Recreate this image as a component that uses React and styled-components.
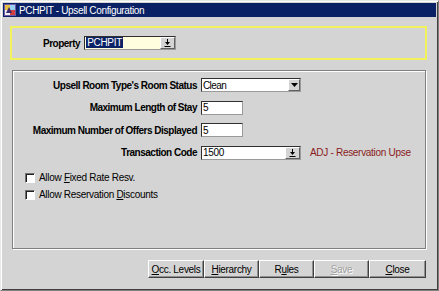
import React from "react";
import styled, { createGlobalStyle } from "styled-components";

const GlobalStyle = createGlobalStyle`
  html, body {
    margin: 0;
    padding: 0;
    background: #d4d4d4;
  }
  body {
    font-family: "Liberation Sans", Arial, sans-serif;
    font-size: 10px;
    letter-spacing: -0.3px;
    color: #000;
  }
`;

const Window = styled.div`
  width: 439px;
  height: 291px;
  box-sizing: border-box;
  background: #d4d4d4;
  border: 1px solid #808080;
  border-top-color: #e8e8e8;
  border-left-color: #e8e8e8;
  box-shadow: inset 1px 1px 0 #fff, inset -1px -1px 0 #404040;
  padding: 2px;
  display: flex;
  flex-direction: column;
`;

const TitleBar = styled.div`
  height: 14px;
  background: #0a2265;
  display: flex;
  align-items: center;
  gap: 3px;
  padding-left: 1px;
  color: #fff;
  font-size: 10px;
  letter-spacing: -0.35px;
`;

const Body = styled.div`
  flex: 1;
  display: flex;
  flex-direction: column;
  padding: 9px 9px 0 7px;
`;

const PropertyBox = styled.div`
  height: 34px;
  box-sizing: border-box;
  border: 2px solid #f2f25a;
  display: flex;
  align-items: center;
  padding-left: 31px;
  gap: 4px;
`;

const Label = styled.span`
  font-weight: 700;
  white-space: nowrap;
  letter-spacing: -0.5px;
`;

const FieldBox = styled.div`
  width: ${(p) => p.$w}px;
  height: 14px;
  box-sizing: border-box;
  background: ${(p) => p.$bg || "#fff"};
  border: 1px solid;
  border-color: #303030 #9a9a9a #9a9a9a #303030;
  display: flex;
  align-items: center;
  overflow: hidden;
`;

const FieldText = styled.span`
  flex: 1;
  padding-left: 1px;
  white-space: nowrap;
  letter-spacing: ${(p) => (p.$tight ? "-0.6px" : "-0.3px")};
`;

const Selected = styled.span`
  background: #0a2265;
  color: #fff;
  padding: 0 1px;
  line-height: 12px;
`;

const SideButton = styled.span`
  width: ${(p) => p.$w || 15}px;
  height: 12px;
  box-sizing: border-box;
  background: #d4d4d4;
  border: 1px solid;
  border-color: #fff #606060 #606060 #fff;
  display: flex;
  align-items: center;
  justify-content: center;
`;

const Panel = styled.div`
  margin: 10px 1px 0 2px;
  height: 179px;
  box-sizing: border-box;
  border: 1px solid #808080;
  box-shadow: inset 1px 1px 0 #fff, 1px 1px 0 #fff;
  padding: 7px 0 0 1px;
  display: flex;
  flex-direction: column;
`;

const FormGrid = styled.div`
  display: grid;
  grid-template-columns: 183px auto;
  column-gap: 4px;
  row-gap: 8.5px;
  align-items: center;
`;

const RowLabel = styled(Label)`
  text-align: right;
`;

const FieldRow = styled.div`
  display: flex;
  align-items: center;
  gap: 9px;
`;

const Description = styled.span`
  color: #8a1c1c;
  white-space: nowrap;
`;

const Checks = styled.div`
  display: flex;
  flex-direction: column;
  gap: 7px;
  margin: 13px 0 0 11px;
`;

const CheckRow = styled.label`
  display: flex;
  align-items: center;
  gap: 4px;
  height: 10px;
  white-space: nowrap;
`;

const CheckBox = styled.span`
  width: 10px;
  height: 10px;
  box-sizing: border-box;
  background: #fff;
  border: 1px solid;
  border-color: #707070 #fff #fff #707070;
  box-shadow: inset 1px 1px 0 #202020;
`;

const ButtonBar = styled.div`
  display: flex;
  justify-content: flex-end;
  margin: 11px 1px 0 0;
`;

const Button = styled.div`
  width: ${(p) => p.$w || 55}px;
  height: 18px;
  box-sizing: border-box;
  border: 1px solid;
  border-color: #fff #404040 #404040 #fff;
  box-shadow: inset -1px -1px 0 #909090;
  display: flex;
  align-items: center;
  justify-content: center;
  white-space: nowrap;
  color: ${(p) => (p.$disabled ? "#a0a0a0" : "#000")};
  text-shadow: ${(p) => (p.$disabled ? "1px 1px 0 #fff" : "none")};
`;

const U = styled.span`
  text-decoration: underline;
`;

const AppIcon = () => (
  <svg width="12" height="12" viewBox="0 0 12 12">
    <rect x="0" y="0" width="12" height="12" fill="#6a5aa8" />
    <rect x="1" y="1" width="5" height="5" fill="#e8c040" />
    <rect x="6" y="6" width="5" height="5" fill="#d04040" />
    <rect x="6" y="1" width="5" height="5" fill="#9ad0f0" />
    <rect x="1" y="6" width="5" height="5" fill="#f0f0f0" />
    <path d="M2 9 L5 3 L8 9 Z" fill="#3a2a70" />
  </svg>
);

const LookupIcon = () => (
  <svg width="7" height="8" viewBox="0 0 7 8">
    <path d="M3 0 H4 V3 H6 L3.5 6 L1 3 H3 Z" fill="#000" />
    <rect x="0.5" y="7" width="6" height="1" fill="#000" />
  </svg>
);

const ArrowIcon = () => (
  <svg width="7" height="4" viewBox="0 0 7 4">
    <path d="M0 0 H7 L3.5 4 Z" fill="#000" />
  </svg>
);

export default function App() {
  return (
    <>
      <GlobalStyle />
      <Window>
        <TitleBar>
          <AppIcon />
          <span>PCHPIT - Upsell Configuration</span>
        </TitleBar>
        <Body>
          <PropertyBox>
            <Label>Property</Label>
            <FieldBox $w={92} $bg="#ffffe0">
              <FieldText>
                <Selected>PCHPIT</Selected>
              </FieldText>
              <SideButton>
                <LookupIcon />
              </SideButton>
            </FieldBox>
          </PropertyBox>

          <Panel>
            <FormGrid>
              <RowLabel>Upsell Room Type's Room Status</RowLabel>
              <FieldBox $w={100}>
                <FieldText $tight>Clean</FieldText>
                <SideButton $w={12}>
                  <ArrowIcon />
                </SideButton>
              </FieldBox>

              <RowLabel>Maximum Length of Stay</RowLabel>
              <FieldBox $w={42}>
                <FieldText>5</FieldText>
              </FieldBox>

              <RowLabel>Maximum Number of Offers Displayed</RowLabel>
              <FieldBox $w={42}>
                <FieldText>5</FieldText>
              </FieldBox>

              <RowLabel>Transaction Code</RowLabel>
              <FieldRow>
                <FieldBox $w={100}>
                  <FieldText>1500</FieldText>
                  <SideButton>
                    <LookupIcon />
                  </SideButton>
                </FieldBox>
                <Description>ADJ - Reservation Upse</Description>
              </FieldRow>
            </FormGrid>

            <Checks>
              <CheckRow>
                <CheckBox />
                <span>
                  Allow <U>F</U>ixed Rate Resv.
                </span>
              </CheckRow>
              <CheckRow>
                <CheckBox />
                <span>
                  Allow Reservation <U>D</U>iscounts
                </span>
              </CheckRow>
            </Checks>
          </Panel>

          <ButtonBar>
            <Button $w={56}>
              <span><U>O</U>cc. Levels</span>
            </Button>
            <Button>
              <span><U>H</U>ierarchy</span>
            </Button>
            <Button>
              <span>R<U>u</U>les</span>
            </Button>
            <Button $disabled>
              <span><U>S</U>ave</span>
            </Button>
            <Button $w={57}>
              <span><U>C</U>lose</span>
            </Button>
          </ButtonBar>
        </Body>
      </Window>
    </>
  );
}
